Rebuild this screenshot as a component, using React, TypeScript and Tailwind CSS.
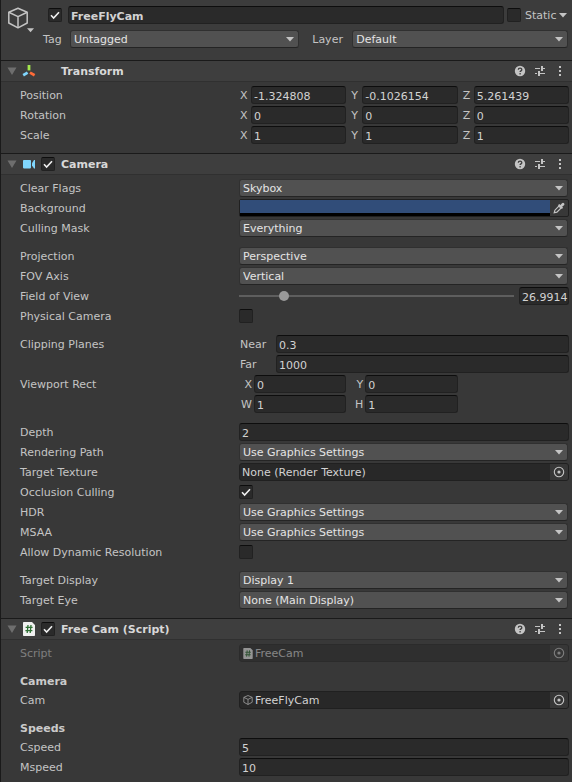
import { useId, useState, type ReactNode } from "react";
import clsx from "clsx";

const inputBase =
  "h-[18px] min-w-0 rounded-[3px] border border-[#212121] border-t-[#0d0d0d] bg-[#2a2a2a] pt-[2px] pl-[2px] text-[#d2d2d2] outline-none";

function Caret({ className }: { className?: string }) {
  return (
    <svg className={className} width="8" height="5" viewBox="0 0 8 5" aria-hidden="true">
      <path d="M0 0h8L4 4.6z" fill="currentColor" />
    </svg>
  );
}

function Check({ id, on, label }: { id?: string; on?: boolean; label?: string }) {
  return (
    <span className="relative block size-[14px] shrink-0">
      <input
        id={id}
        type="checkbox"
        aria-label={label}
        defaultChecked={on}
        className="peer block size-[14px] appearance-none rounded-[2px] border border-[#212121] border-t-[#0d0d0d] bg-[#2a2a2a]"
      />
      <svg
        className="pointer-events-none absolute inset-0 hidden peer-checked:block"
        width="14"
        height="14"
        viewBox="0 0 14 14"
        fill="none"
        aria-hidden="true"
      >
        <path d="M3 7.3 5.6 10 11 4.2" stroke="#f0f0f0" strokeWidth="1.6" />
      </svg>
    </span>
  );
}

function Dropdown({ id, options, className = "flex-1" }: { id: string; options: string[]; className?: string }) {
  return (
    <span className={clsx("relative block min-w-0", className)}>
      <select
        id={id}
        className="block h-[18px] w-full appearance-none rounded-[3px] border border-[#303030] border-b-[#242424] bg-[#515151] pt-px pl-[3px] text-[#e4e4e4] outline-none"
      >
        {options.map((o) => (
          <option key={o}>{o}</option>
        ))}
      </select>
      <Caret className="pointer-events-none absolute top-[7px] right-[5px] text-[#c4c4c4]" />
    </span>
  );
}

function Row({ label, id, dim, children }: { label: string; id?: string; dim?: boolean; children: ReactNode }) {
  return (
    <div className={clsx("flex h-auto items-start", dim && "opacity-50")}>
      {id ? (
        <label htmlFor={id} className="h-[18px] w-[219px] shrink-0 leading-5">{label}</label>
      ) : (
        <span className="h-[18px] w-[219px] shrink-0 leading-5">{label}</span>
      )}
      <div className="flex min-w-0 flex-1 items-center">{children}</div>
    </div>
  );
}

function SelectRow({ label, options }: { label: string; options: string[] }) {
  const id = useId();
  return (
    <Row label={label} id={id}>
      <Dropdown id={id} options={options} className="mr-px flex-1" />
    </Row>
  );
}

function CheckRow({ label, on }: { label: string; on?: boolean }) {
  const id = useId();
  return (
    <Row label={label} id={id}>
      <div className="flex h-[18px] items-center">
        <Check id={id} on={on} />
      </div>
    </Row>
  );
}

function TextRow({ label, value }: { label: string; value: string }) {
  const id = useId();
  return (
    <Row label={label} id={id}>
      <input id={id} defaultValue={value} className={clsx(inputBase, "flex-1")} />
    </Row>
  );
}

function Axis({ name, value, wide }: { name: string; value: string; wide?: boolean }) {
  return (
    <label className="flex h-[18px] min-w-0">
      <span className={clsx("shrink-0 leading-5", wide ? "w-[15px] pr-[2px] text-right" : "w-3 pl-px")}>{name}</span>
      <input defaultValue={value} className={clsx(inputBase, "w-0 flex-1")} />
    </label>
  );
}

function VectorRow({ label, values }: { label: string; values: string[] }) {
  return (
    <Row label={label}>
      <div role="group" aria-label={label} className="grid flex-1 grid-cols-3 gap-1">
        {["X", "Y", "Z"].map((n, i) => (
          <Axis key={n} name={n} value={values[i]} />
        ))}
      </div>
    </Row>
  );
}

function ObjectRow({ label, value, icon, dim }: { label: string; value: string; icon?: ReactNode; dim?: boolean }) {
  const id = useId();
  return (
    <Row label={label} id={id} dim={dim}>
      <div className="flex h-[18px] min-w-0 flex-1 items-center overflow-hidden rounded-[3px] border border-[#202020] bg-[#282828]">
        {icon && <span className="ml-[3px] shrink-0">{icon}</span>}
        <input
          id={id}
          readOnly
          disabled={dim}
          value={value}
          className="h-4 min-w-0 flex-1 bg-transparent pt-[2px] pl-[2px] text-[#d2d2d2] outline-none"
        />
        <button type="button" aria-label={"Select " + label} disabled={dim} className="flex h-4 w-[18px] items-center justify-center bg-[#373737]">
          <svg width="12" height="12" viewBox="0 0 12 12" aria-hidden="true">
            <circle cx="6" cy="6" r="4.7" fill="none" stroke="#c4c4c4" strokeWidth="1.1" />
            <circle cx="6" cy="6" r="1.6" fill="#c4c4c4" />
          </svg>
        </button>
      </div>
    </Row>
  );
}

function CubeIcon({ size, width, className }: { size: number; width: number; className?: string }) {
  return (
    <svg width={size} height={size} viewBox="0 0 22 22" fill="none" stroke="currentColor" strokeWidth={width} strokeLinejoin="round" className={className} aria-hidden="true">
      <path d="M11 1.2 20.2 5.2V16L11 20.8 1.8 16V5.2z" />
      <path d="M1.8 5.2 11 9.6l9.2-4.4M11 9.6v11.2" />
    </svg>
  );
}

function ScriptIcon({ width, height }: { width: number; height: number }) {
  return (
    <svg width={width} height={height} viewBox="0 0 12 14" aria-hidden="true">
      <path d="M0.8 0H9l3 3v10.2a.8.8 0 0 1-.8.8H.8a.8.8 0 0 1-.8-.8V.8A.8.8 0 0 1 .8 0z" fill="#f0f0f0" />
      <path d="M5 3 4.2 11M8 3 7.2 11M2.6 5.4h7M2.4 8.6h7" stroke="#2e7034" strokeWidth="1.3" fill="none" />
    </svg>
  );
}

function TransformIcon() {
  return (
    <svg width="14" height="14" viewBox="0 0 14 14" fill="none" strokeWidth="2.8" aria-hidden="true">
      <path d="M7 1v5.4" stroke="#a4e84c" />
      <path d="M5.6 8.6 1.2 11.2" stroke="#80d6fd" />
      <path d="M8 8.6l4.6 2.6" stroke="#ff6b38" />
    </svg>
  );
}

function CameraIcon() {
  return (
    <svg width="14" height="14" viewBox="0 0 14 14" fill="#80d6fd" aria-hidden="true">
      <rect x="1" y="3" width="8" height="8.4" rx="0.8" />
      <path d="M10 6.2 12 3h1v8.4h-1L10 8.4z" />
    </svg>
  );
}

function Section({ title, icon, toggle, children }: { title: string; icon: ReactNode; toggle?: boolean; children: ReactNode }) {
  const [open, setOpen] = useState(true);
  return (
    <section className="border-t border-[#1a1a1a]">
      <header className="flex h-[21px] items-center border-b border-[#303030] bg-[#3e3e3e] px-[6px]">
        <button type="button" aria-label={"Toggle " + title} aria-expanded={open} onClick={() => setOpen(!open)} className="w-[15px]">
          <svg width="10" height="8" viewBox="0 0 10 8" className="block" aria-hidden="true">
            <path d="M.5.5h9L5 8z" fill="#6e6e6e" />
          </svg>
        </button>
        <span className="flex w-[14px] justify-center">{icon}</span>
        <span className="ml-[5px] w-5">{toggle && <Check on label={"Enable " + title} />}</span>
        <h2 className="flex-1 pt-[2px] font-bold text-[#d8d8d8]">{title}</h2>
        <div className="flex items-center gap-2 text-[#c4c4c4]">
          <button type="button" aria-label="Help">
            <svg width="12" height="12" viewBox="0 0 12 12" className="block" aria-hidden="true">
              <circle cx="6" cy="6" r="5.2" fill="currentColor" />
              <path d="M4.3 4.8c0-2.2 3.5-2.2 3.5-.1 0 1.2-1.7 1.1-1.7 2.4M6.1 8.1v1.3" fill="none" stroke="#3e3e3e" strokeWidth="1.3" />
            </svg>
          </button>
          <button type="button" aria-label="Presets">
            <svg width="12" height="12" viewBox="0 0 12 12" fill="none" stroke="currentColor" className="block" aria-hidden="true">
              <path d="M1 3.5h5M7 3.5h4M1 8.5h2M4 8.5h7" strokeWidth="1" />
              <path d="M8 1v5M5 6v5" strokeWidth="2" />
            </svg>
          </button>
          <button type="button" aria-label="More options">
            <svg width="12" height="12" viewBox="0 0 12 12" fill="currentColor" className="block" aria-hidden="true">
              <path d="M5 1h2v2H5zM5 5h2v2H5zM5 9h2v2H5z" />
            </svg>
          </button>
        </div>
      </header>
      {open && <div className="flex flex-col gap-[2px] pt-1 pr-[3px] pb-[9px] pl-[19px]">{children}</div>}
    </section>
  );
}

function Gap() {
  return <div className="h-[6px]" />;
}

function Heading({ children }: { children: string }) {
  return <h3 className="h-[25px] pt-[10px] leading-4 font-bold text-[#cacaca]">{children}</h3>;
}

const graphics = ["Use Graphics Settings", "Off"];

export default function App() {
  const uid = useId();
  const [fov, setFov] = useState("26.9914");
  return (
    <main className="min-h-screen border-l border-[#1a1a1a] bg-[#383838] font-['DejaVu_Sans',Verdana,sans-serif] text-[11px] leading-4 text-[#c4c4c4]">
      <header className="flex gap-2 bg-[#3c3c3c] pt-[6px] pr-[3px] pb-3 pl-[6px]">
        <button type="button" aria-label="Object icon" className="flex w-[27px] flex-col pt-px">
          <CubeIcon size={22} width={1.5} />
          <Caret className="-mt-px w-[7px] self-end" />
        </button>
        <div className="min-w-0 flex-1">
          <div className="flex items-center pl-[6px]">
            <Check on label="Active" />
            <input aria-label="Name" defaultValue="FreeFlyCam" className={clsx(inputBase, "ml-[6px] flex-1 font-bold")} />
            <div className="ml-[3px] flex items-center">
              <Check id={uid + "static"} />
              <label htmlFor={uid + "static"} className="ml-1 w-[34px] pt-px">Static</label>
              <button type="button" aria-label="Static options" className="pr-[2px]">
                <Caret />
              </button>
            </div>
          </div>
          <div className="mt-[6px] flex items-center pr-px">
            <label htmlFor={uid + "tag"} className="w-7 pt-px pl-px">Tag</label>
            <Dropdown id={uid + "tag"} options={["Untagged", "MainCamera", "Player"]} className="flex-[17]" />
            <label htmlFor={uid + "layer"} className="ml-[13px] w-10 pt-px">Layer</label>
            <Dropdown id={uid + "layer"} options={["Default", "UI", "Water"]} className="flex-[16]" />
          </div>
        </div>
      </header>

      <Section title="Transform" icon={<TransformIcon />}>
        <VectorRow label="Position" values={["-1.324808", "-0.1026154", "5.261439"]} />
        <VectorRow label="Rotation" values={["0", "0", "0"]} />
        <VectorRow label="Scale" values={["1", "1", "1"]} />
      </Section>

      <Section title="Camera" toggle icon={<CameraIcon />}>
        <SelectRow label="Clear Flags" options={["Skybox", "Solid Color"]} />
        <Row label="Background" id={uid + "bg"}>
          <div className="flex h-[18px] min-w-0 flex-1 rounded-[2px] border border-[#202020]">
            <div className="flex min-w-0 flex-1 flex-col border-b-[3px] border-black">
              <input
                id={uid + "bg"}
                type="color"
                defaultValue="#314d79"
                className="block h-[13px] w-full appearance-none bg-[#314d79] p-0 [&::-webkit-color-swatch]:rounded-none [&::-webkit-color-swatch]:border-0 [&::-webkit-color-swatch-wrapper]:p-0"
              />
            </div>
            <button type="button" aria-label="Pick color" className="flex w-[18px] items-center justify-center">
              <svg width="12" height="12" viewBox="0 0 12 12" aria-hidden="true">
                <path d="M1.2 10.8 1.9 8.2l4-4 2 2-4 4z" fill="none" stroke="#c4c4c4" strokeWidth="1.2" />
                <path d="M5 3.2 6.2 2l1.2 1L9 1.2a1.4 1.4 0 0 1 2 2L9.1 4.8l1 1L8.9 7z" fill="#c4c4c4" />
              </svg>
            </button>
          </div>
        </Row>
        <SelectRow label="Culling Mask" options={["Everything", "Nothing"]} />
        <Gap />
        <SelectRow label="Projection" options={["Perspective", "Orthographic"]} />
        <SelectRow label="FOV Axis" options={["Vertical", "Horizontal"]} />
        <Row label="Field of View" id={uid + "fov"}>
          <input
            id={uid + "fov"}
            type="range"
            min="0"
            max="179"
            step="any"
            value={fov}
            onChange={(e) => setFov(e.target.value)}
            className="h-[18px] min-w-0 flex-1 appearance-none bg-transparent [&::-webkit-slider-runnable-track]:h-[2px] [&::-webkit-slider-runnable-track]:bg-[#5e5e5e] [&::-webkit-slider-thumb]:-mt-1 [&::-webkit-slider-thumb]:size-[10px] [&::-webkit-slider-thumb]:appearance-none [&::-webkit-slider-thumb]:rounded-full [&::-webkit-slider-thumb]:bg-[#999999]"
          />
          <input aria-label="Field of View value" value={fov} onChange={(e) => setFov(e.target.value)} className={clsx(inputBase, "ml-[5px] w-[50px]")} />
        </Row>
        <CheckRow label="Physical Camera" />
        <Gap />
        <Row label="Clipping Planes">
          <div role="group" aria-label="Clipping Planes" className="flex flex-1 flex-col gap-[2px]">
            {[["Near", "0.3"], ["Far", "1000"]].map(([n, v]) => (
              <label key={n} className="flex h-[18px]">
                <span className="w-[37px] pl-px leading-5">{n}</span>
                <input defaultValue={v} className={clsx(inputBase, "flex-1")} />
              </label>
            ))}
          </div>
        </Row>
        <Row label="Viewport Rect">
          <div role="group" aria-label="Viewport Rect" className="grid flex-1 grid-cols-3 gap-x-1 gap-y-[2px]">
            <Axis wide name="X" value="0" />
            <Axis wide name="Y" value="0" />
            <span />
            <Axis wide name="W" value="1" />
            <Axis wide name="H" value="1" />
          </div>
        </Row>
        <Gap />
        <TextRow label="Depth" value="2" />
        <SelectRow label="Rendering Path" options={graphics} />
        <ObjectRow label="Target Texture" value="None (Render Texture)" />
        <CheckRow label="Occlusion Culling" on />
        <SelectRow label="HDR" options={graphics} />
        <SelectRow label="MSAA" options={graphics} />
        <CheckRow label="Allow Dynamic Resolution" />
        <Gap />
        <SelectRow label="Target Display" options={["Display 1", "Display 2"]} />
        <SelectRow label="Target Eye" options={["None (Main Display)", "Both"]} />
      </Section>

      <Section title="Free Cam (Script)" toggle icon={<ScriptIcon width={12} height={14} />}>
        <ObjectRow label="Script" value="FreeCam" dim icon={<ScriptIcon width={10} height={11} />} />
        <Heading>Camera</Heading>
        <ObjectRow label="Cam" value="FreeFlyCam" icon={<CubeIcon size={10} width={1.8} className="text-[#a0a0a0]" />} />
        <Heading>Speeds</Heading>
        <TextRow label="Cspeed" value="5" />
        <TextRow label="Mspeed" value="10" />
      </Section>
    </main>
  );
}
